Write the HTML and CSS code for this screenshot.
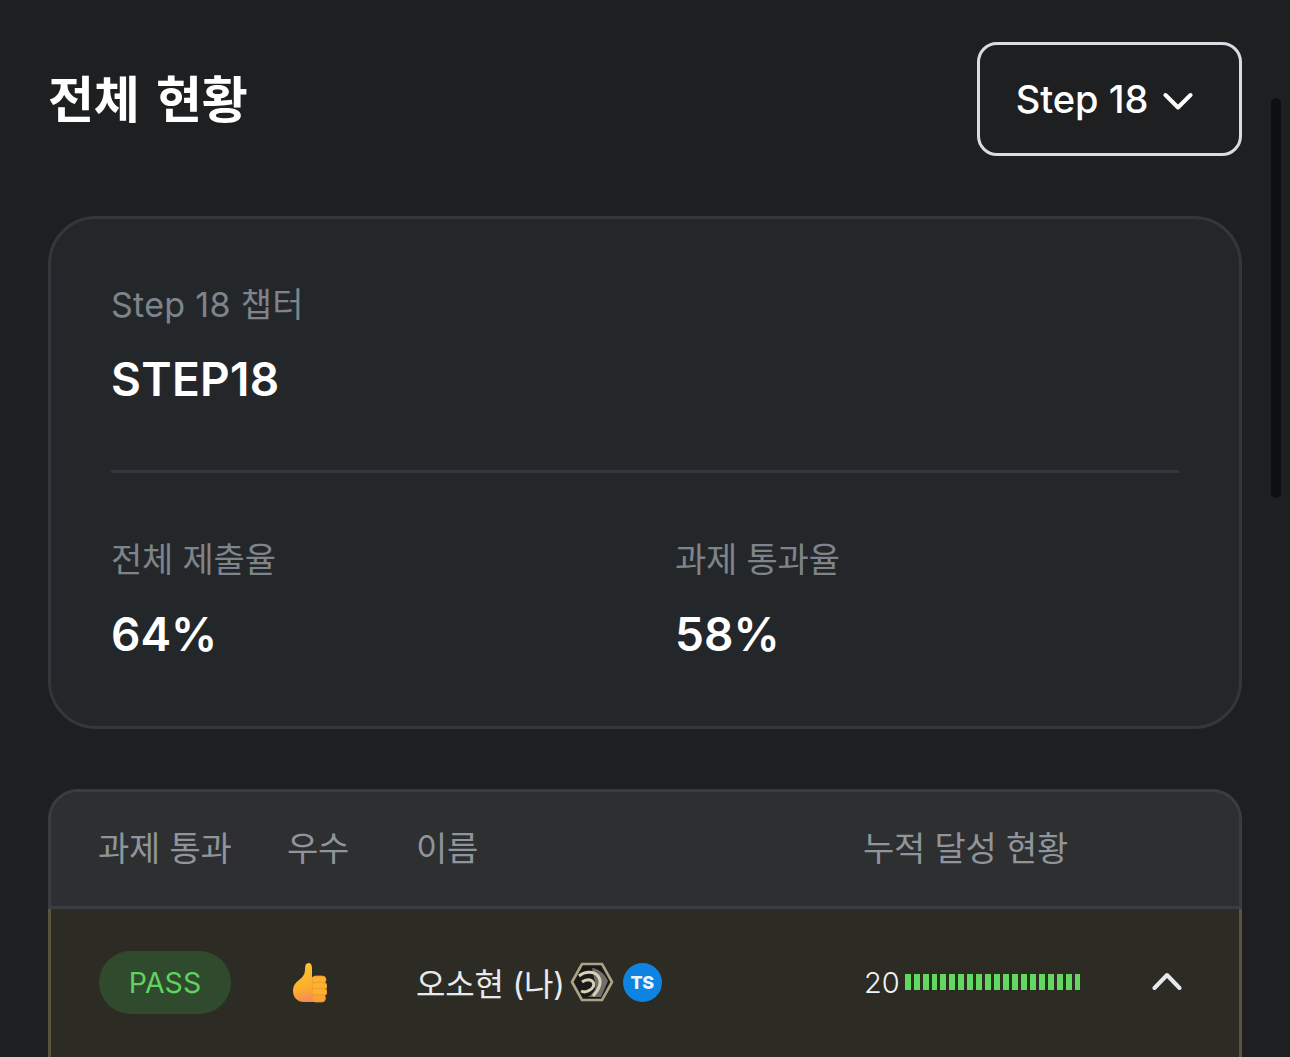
FILE: index.html
```html
<!DOCTYPE html>
<html lang="ko">
<head>
<meta charset="utf-8">
<title>전체 현황</title>
<link rel="stylesheet" href="styles.css">
</head>
<body>
<main class="page">
  <header class="top">
    <h1 class="title">전체 현황</h1>
    <button class="select" type="button">
      <span>Step 18</span>
      <svg class="select-icon" viewBox="0 0 30 18" width="30" height="18" fill="none" stroke="currentColor" stroke-width="4" stroke-linecap="round" stroke-linejoin="round"><path d="M2.500 3L15 15.500 27.500 3"/></svg>
    </button>
  </header>

  <section class="card">
    <div class="label label-step">Step 18 챕터</div>
    <div class="value value-step">STEP18</div>
    <hr class="divider">
    <div class="stats">
      <div>
        <div class="label">전체 제출율</div>
        <div class="value">64%</div>
      </div>
      <div>
        <div class="label">과제 통과율</div>
        <div class="value">58%</div>
      </div>
    </div>
  </section>

  <section class="table">
    <div class="row head">
      <div>과제 통과</div>
      <div>우수</div>
      <div>이름</div>
      <div>누적 달성 현황</div>
    </div>
    <div class="row me">
      <div><span class="pass">PASS</span></div>
      <div class="thumb-cell">
        <svg viewBox="0 0 36 42" width="36" height="42">
          <defs>
            <linearGradient id="thumb" x1="0.3" y1="0" x2="0.5" y2="1">
              <stop offset="0" stop-color="#fdc42f"/>
              <stop offset="0.65" stop-color="#fbae2d"/>
              <stop offset="1" stop-color="#f5885a"/>
            </linearGradient>
          </defs>
          <path fill="url(#thumb)" d="M17.500 1c2.500 0 3.500 2 3.500 5v9h7v25H13C6 40 2 35 2 29c0-5 2-8 6-11 4-3 6-6 6-11 0-4 1-6 3.500-6z"/>
          <g fill="#fcb22e" stroke="#ee9a2c" stroke-width="0.8">
            <rect x="21" y="14" width="14" height="7.500" rx="3.700"/>
            <rect x="21" y="20.500" width="15" height="7" rx="3.500"/>
            <rect x="21" y="26.500" width="15" height="7" rx="3.500"/>
            <rect x="21" y="32.500" width="13.500" height="7.500" rx="3.700" fill="#faa238"/>
          </g>
        </svg>
      </div>
      <div class="name">
        <span class="name-text">오소현 (나)</span>
        <svg class="rank" viewBox="0 0 44 40" width="44" height="40">
          <path d="M12 2h20l10 18-10 18H12L2 20z" fill="#1b1a18" stroke="#aaa386" stroke-width="2.600" stroke-linejoin="round"/>
          <path d="M22 6c7 1 13 6 16 13l-7 16H18c6-4 9-9 7-15-1-4-2-9-3-14z" fill="#6f6e6a"/>
          <path d="M9 14c6-5 15-5 19 0 4 5 2 13-5 20" fill="none" stroke="#d6d0b8" stroke-width="3"/>
          <path d="M12 20c4-3 9-3 11 0 2 3 0 7-5 9-2 1-5 1-7 0" fill="none" stroke="#d6d0b8" stroke-width="3"/>
        </svg>
        <span class="ts">TS</span>
      </div>
      <div class="progress">
        <span class="count">20</span>
        <div class="bars">
          <i></i><i></i><i></i><i></i><i></i><i></i><i></i><i></i><i></i><i></i>
          <i></i><i></i><i></i><i></i><i></i><i></i><i></i><i></i><i></i><i></i>
        </div>
      </div>
      <svg class="toggle" viewBox="0 0 30 20" width="30" height="20" fill="none" stroke="#e6e9ee" stroke-width="4" stroke-linecap="round" stroke-linejoin="round"><path d="M2.500 17L15 4l12.500 13"/></svg>
    </div>
  </section>
</main>
<div class="scrollbar"></div>
</body>
</html>
```
FILE: styles.css
```css
* { box-sizing: border-box; }
html, body {
  margin: 0;
  height: 100%;
  overflow: hidden;
  background: #1e1f21;
}
body {
  position: relative;
  color: #fff;
  font-family: Inter, "Noto Sans CJK KR", sans-serif;
}
.page {
  padding: 42px 48px 0;
}
.top {
  display: flex;
  align-items: center;
  justify-content: space-between;
  height: 114px;
}
.title {
  margin: -6px 0 0;
  font-size: 50px;
  font-weight: 700;
  letter-spacing: -0.3px;
  word-spacing: 5px;
}
.select {
  display: flex;
  align-items: center;
  justify-content: center;
  gap: 15px;
  width: 265px;
  height: 114px;
  padding: 0 10px 0 0;
  border: 3px solid #d6dde3;
  border-radius: 20px;
  background: #1e1f21;
  color: #fff;
  font: 500 38px Inter, "Noto Sans CJK KR", sans-serif;
}
.select-icon { display: block; margin-top: 3px; }
.card {
  margin-top: 60px;
  height: 513px;
  padding: 64px 60px 0 60px;
  border: 3px solid #33363a;
  border-radius: 48px;
  background: #24272a;
}
.label {
  height: 44px;
  color: #7e848a;
  font-size: 34px;
  line-height: 44px;
  letter-spacing: -0.2px;
}
.label-step { letter-spacing: 0.3px; }
.value {
  height: 48px;
  margin-top: 28px;
  font-size: 46px;
  font-weight: 600;
  line-height: 48px;
}
.value-step { letter-spacing: 0.3px; }
.divider {
  height: 3px;
  margin: 67px 0 65px;
  border: 0;
  background: #33363a;
}
.stats {
  display: grid;
  grid-template-columns: 564px 1fr;
}
.table {
  margin-top: 60px;
}
.row {
  display: grid;
  align-items: center;
}
.head {
  height: 120px;
  padding: 0 0 6px 47px;
  border: 3px solid #393c40;
  border-radius: 30px 30px 0 0;
  background: #2d2f31;
  grid-template-columns: 189px 129px 447px 1fr;
  color: #8f959b;
  font-size: 34px;
  letter-spacing: -0.2px;
}
.me {
  height: 160px;
  padding: 0 0 14px 48px;
  border-left: 3px solid #5a5340;
  border-right: 3px solid #5a5340;
  background: #2c2b24;
  grid-template-columns: 189px 129px 447px 288px 30px;
}
.pass {
  display: block;
  width: 132px;
  height: 63px;
  border-radius: 32px;
  background: #304a2d;
  color: #5fd35f;
  font-size: 28.500px;
  line-height: 63px;
  text-align: center;
}
.thumb-cell svg { display: block; margin: 1px 0 0 3px; }
.name {
  display: flex;
  align-items: center;
  color: #e8ebee;
  font-size: 32px;
  letter-spacing: -0.2px;
}
.name-text { margin-left: -1px; }
.rank { margin-left: 5px; flex: none; }
.ts {
  display: block;
  width: 39px;
  height: 39px;
  margin-left: 9px;
  border-radius: 50%;
  background: #0e83e0;
  color: #e9f4fd;
  font-size: 18px;
  font-weight: 800;
  line-height: 39px;
  text-align: center;
}
.progress {
  display: flex;
  align-items: center;
  gap: 5px;
}
.count {
  color: #f2f3f4;
  font-size: 29px;
  font-weight: 300;
}
.bars {
  display: flex;
  gap: 3px;
}
.bars i {
  display: block;
  width: 5.950px;
  height: 16px;
  background: #62d85f;
}
.toggle { display: block; margin-bottom: 3px; }
.scrollbar {
  position: absolute;
  top: 98px;
  left: 1271px;
  width: 10px;
  height: 400px;
  border-radius: 5px;
  background: #0e0f11;
}
```
